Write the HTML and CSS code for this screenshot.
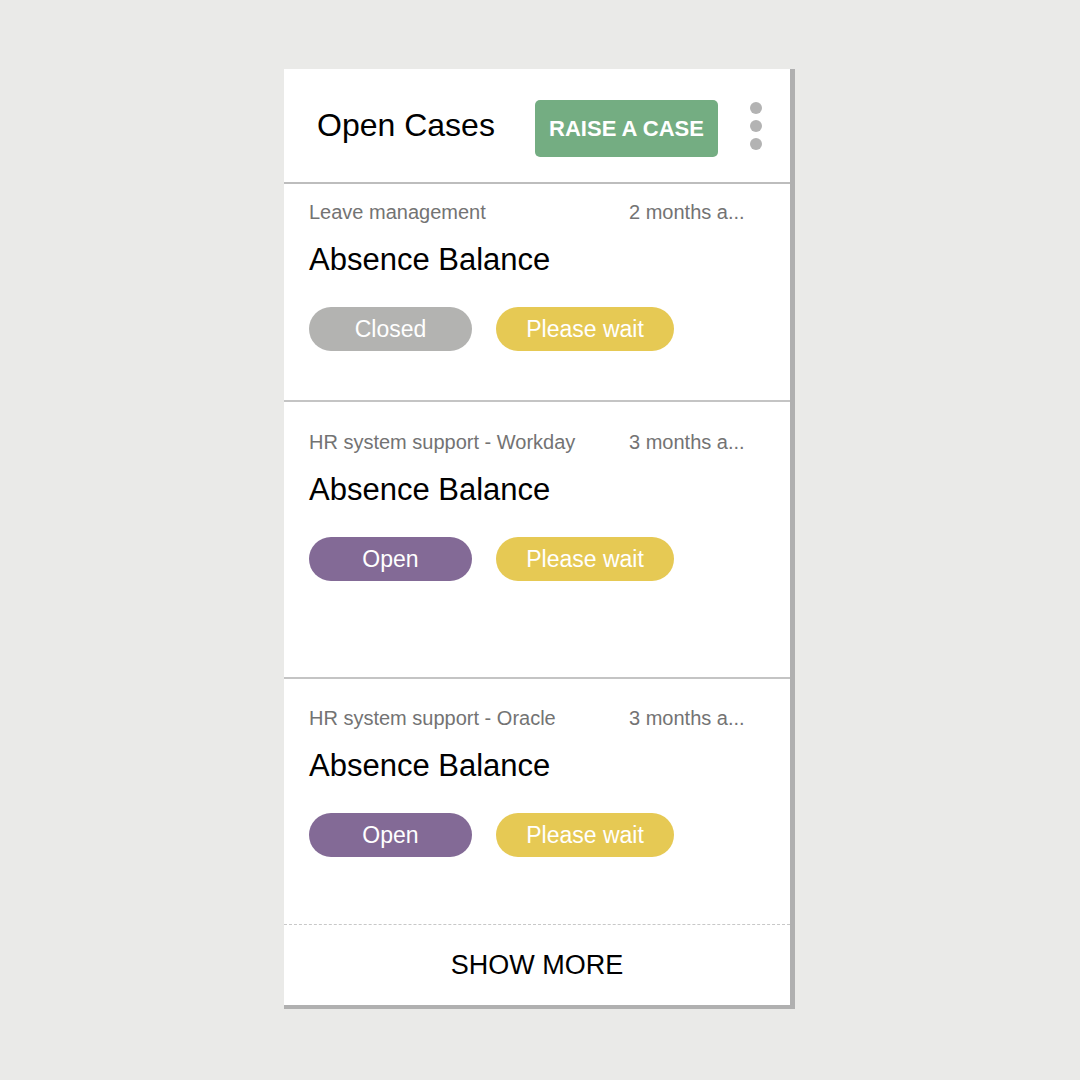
FILE: index.html
```html
<!DOCTYPE html>
<html lang="en">
<head>
    <meta charset="UTF-8">
    <meta name="viewport" content="width=device-width, initial-scale=1.0">
    <title>Open Cases</title>
    <link rel="stylesheet" href="styles.css">
</head>
<body>

    <div class="card">
        <div class="header">
            <h1>Open Cases</h1>
            <button type="button" class="raise-btn">RAISE A CASE</button>
            <div class="menu">
                <span></span>
                <span></span>
                <span></span>
            </div>
        </div>

        <div class="case case-first">
            <div class="meta">
                <span class="category">Leave management</span>
                <span class="time">2 months a...</span>
            </div>
            <h2>Absence Balance</h2>
            <div class="pills">
                <span class="pill pill-closed">Closed</span>
                <span class="pill pill-wait">Please wait</span>
            </div>
        </div>

        <div class="case case-second">
            <div class="meta">
                <span class="category">HR system support - Workday</span>
                <span class="time">3 months a...</span>
            </div>
            <h2>Absence Balance</h2>
            <div class="pills">
                <span class="pill pill-open">Open</span>
                <span class="pill pill-wait">Please wait</span>
            </div>
        </div>

        <div class="case case-last">
            <div class="meta">
                <span class="category">HR system support - Oracle</span>
                <span class="time">3 months a...</span>
            </div>
            <h2>Absence Balance</h2>
            <div class="pills">
                <span class="pill pill-open">Open</span>
                <span class="pill pill-wait">Please wait</span>
            </div>
        </div>

        <div class="show-more">SHOW MORE</div>
    </div>

</body>
</html>
```

FILE: styles.css
```css
body {
    margin: 0;
    background-color: #eaeae8;
    font-family: "Liberation Sans", Arial, sans-serif;
    display: flex;
    justify-content: center;
    padding-top: 69px;
}

.card {
    background-color: white;
    width: 506px;
    margin-right: 1px;
    border-right: 5px solid #b0b0b0;
    border-bottom: 4px solid #b0b0b0;
}

.header {
    display: flex;
    align-items: center;
    height: 113px;
    padding: 0 28px 0 33px;
    border-bottom: 2px solid #bdbdbd;
}

h1 {
    flex: 1;
    margin: 0;
    font-size: 32px;
    font-weight: normal;
    color: black;
}

.raise-btn {
    margin-top: 6px;
    width: 183px;
    height: 57px;
    padding: 0;
    border: none;
    border-radius: 5px;
    background-color: #74ad82;
    color: white;
    font-family: inherit;
    font-size: 22px;
    font-weight: bold;
}

.menu {
    margin-left: 32px;
    display: flex;
    flex-direction: column;
    gap: 6px;
}

.menu span {
    width: 12px;
    height: 12px;
    border-radius: 50%;
    background-color: #b3b3b3;
}

.case {
    padding: 16px 24px 49px 25px;
    border-bottom: 2px solid #c4c4c4;
}

.case-second {
    padding-top: 28px;
    padding-bottom: 96px;
}

.case-last {
    padding-top: 27px;
    padding-bottom: 67px;
    border-bottom: 1px dashed #c8c8c8;
}

.meta {
    display: flex;
    font-size: 20px;
    line-height: 24px;
    color: #737373;
}

.category {
    width: 320px;
}

.time {
    white-space: nowrap;
}

h2 {
    margin: 18px 0 0 0;
    font-size: 31px;
    line-height: 36px;
    font-weight: normal;
    color: black;
}

.pills {
    display: flex;
    gap: 24px;
    margin-top: 29px;
}

.pill {
    height: 44px;
    border-radius: 22px;
    color: white;
    font-size: 23px;
    line-height: 44px;
    text-align: center;
}

.pill-closed {
    width: 163px;
    background-color: #b3b3b1;
}

.pill-open {
    width: 163px;
    background-color: #836a96;
}

.pill-wait {
    width: 178px;
    background-color: #e6c954;
}

.show-more {
    height: 80px;
    line-height: 80px;
    text-align: center;
    font-size: 27px;
    color: black;
}
```
